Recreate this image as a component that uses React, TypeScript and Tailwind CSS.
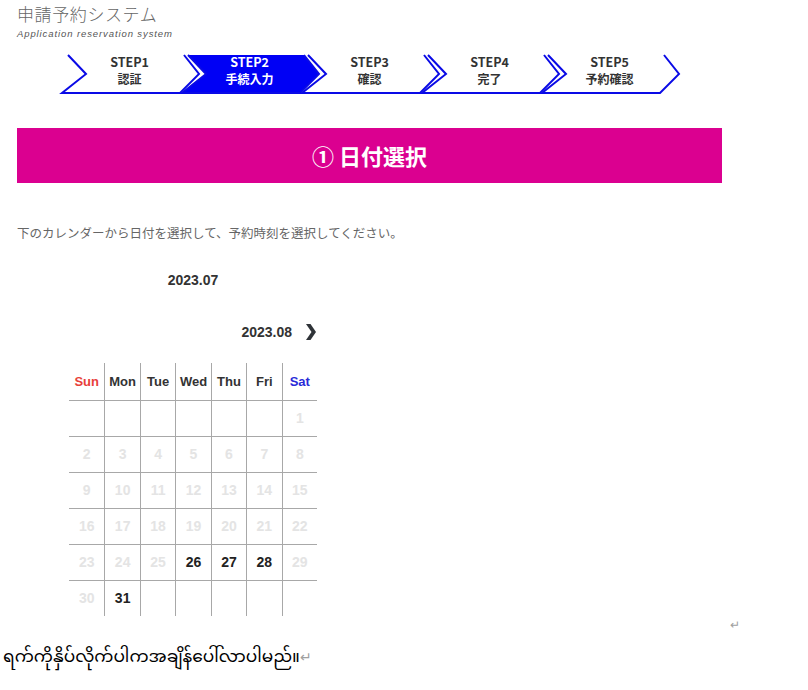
import React from "react"

const jp = { fontFamily: '"Noto Sans CJK JP", "Noto Sans", sans-serif' }
const latin = { fontFamily: '"Liberation Sans", Arial, sans-serif' }

interface Step {
  label: string
  name: string
  active?: boolean
}

const steps: Step[] = [
  { label: "STEP1", name: "認証" },
  { label: "STEP2", name: "手続入力", active: true },
  { label: "STEP3", name: "確認" },
  { label: "STEP4", name: "完了" },
  { label: "STEP5", name: "予約確認" },
]

const weekdays = [
  { d: "Sun", c: "text-[#e8403a]" },
  { d: "Mon", c: "text-[#333333]" },
  { d: "Tue", c: "text-[#333333]" },
  { d: "Wed", c: "text-[#333333]" },
  { d: "Thu", c: "text-[#333333]" },
  { d: "Fri", c: "text-[#333333]" },
  { d: "Sat", c: "text-[#2a2ad8]" },
]

// August 2023 shown with 1st on Saturday (as in the screen)
const cells: (number | null)[] = [null, null, null, null, null, null, 1]
for (let i = 2; i <= 31; i++) cells.push(i)
while (cells.length % 7 !== 0) cells.push(null)
const available = [26, 27, 28, 31]

function StepArrow({ step }: { step: Step }) {
  const color = step.active ? "text-white" : "text-[#333333]"
  return (
    <div className="relative w-[135px] h-[38px] -mr-[15px] flex flex-col items-center pt-[-1px]" style={jp}>
      <svg className="absolute left-0 top-0 overflow-visible" width="137" height="38" viewBox="0 0 137 38">
        {step.active && <polygon points="6,0 122,0 137,19 118,38 0,38 24,19" fill="#0000f5" />}
        <polyline
          points="6,0 24,19 0,38 118,38 137,19 122,0"
          fill="none"
          stroke="#0a0ae6"
          strokeWidth="2"
          strokeLinejoin="miter"
        />
      </svg>
      <span className={`relative text-[12.5px] font-bold leading-[14px] ${color}`}>{step.label}</span>
      <span className={`relative text-[12px] font-bold leading-[20px] ${color}`}>{step.name}</span>
    </div>
  )
}

export default function App() {
  return (
    <div className="w-[808px] h-[690px] bg-white overflow-hidden">
      {/* Header */}
      <div className="pl-[17px] pt-[2px]" style={jp}>
        <div className="text-[17px] leading-[24px] tracking-[0.6px] text-[#666666] font-light">申請予約システム</div>
        <div className="text-[9.5px] leading-[14px] italic tracking-[0.9px] text-[#555555] mt-[1px]" style={latin}>
          Application reservation system
        </div>
      </div>

      {/* Steps */}
      <div className="flex pl-[62px] mt-[14px]">
        {steps.map((s) => (
          <StepArrow key={s.label} step={s} />
        ))}
      </div>

      {/* Section title */}
      <div
        className="ml-[17px] mt-[35px] w-[705px] h-[55px] bg-[#db0090] flex items-center justify-center text-white text-[22px] font-bold"
        style={jp}
      >
        ① 日付選択
      </div>

      <p className="ml-[17px] mt-[41px] text-[12.5px] leading-[18px] text-[#666666]" style={jp}>
        下のカレンダーから日付を選択して、予約時刻を選択してください。
      </p>

      {/* Calendar */}
      <div className="ml-[69px] w-[248px]" style={latin}>
        <div className="mt-[28px] h-[20px] text-center text-[14px] leading-[20px] font-bold text-[#333333]">2023.07</div>
        <div className="mt-[32px] h-[20px] flex items-center justify-end text-[14px] leading-[20px] font-bold text-[#333333]">
          <span>2023.08</span>
          <svg className="ml-[12px] mr-[1px]" width="12" height="16" viewBox="0 0 12 16">
            <path d="M2 0 L6.5 0 L12 8 L6.5 16 L2 16 L7.5 8 Z" fill="#2f3338" />
          </svg>
        </div>

        <div className="mt-[21px] grid grid-cols-7">
          {weekdays.map((w, i) => (
            <div
              key={w.d}
              className={`h-[37px] flex items-center justify-center text-[13px] font-bold ${w.c} ${i > 0 ? "border-l border-[#a8a8a8]" : ""}`}
            >
              {w.d}
            </div>
          ))}
          {cells.map((n, i) => {
            const on = n !== null && available.includes(n)
            return (
              <div
                key={i}
                className={`h-[36px] border-t border-[#a8a8a8] flex items-center justify-center text-[14px] ${
                  i % 7 > 0 ? "border-l" : ""
                } ${on ? "text-[#222222] font-bold" : "text-[#e4e4e4] font-bold"}`}
              >
                {n ?? ""}
              </div>
            )
          })}
        </div>
      </div>

      <div className="h-[18px] flex justify-end pr-[68px] text-[12px] leading-[18px] text-[#a0a0a0]" style={latin}>
        ↵
      </div>

      <div
        className="pl-[3px] mt-[8px] text-[17px] leading-[30px] text-black"
        style={{ fontFamily: '"Noto Sans Myanmar", "Padauk", "Myanmar Text", "Noto Sans", sans-serif' }}
      >
        ရက်ကိုနှိပ်လိုက်ပါကအချိန်ပေါ်လာပါမည်။
        <span className="text-[14px] text-[#a0a0a0]" style={latin}>
          ↵
        </span>
      </div>
    </div>
  )
}
